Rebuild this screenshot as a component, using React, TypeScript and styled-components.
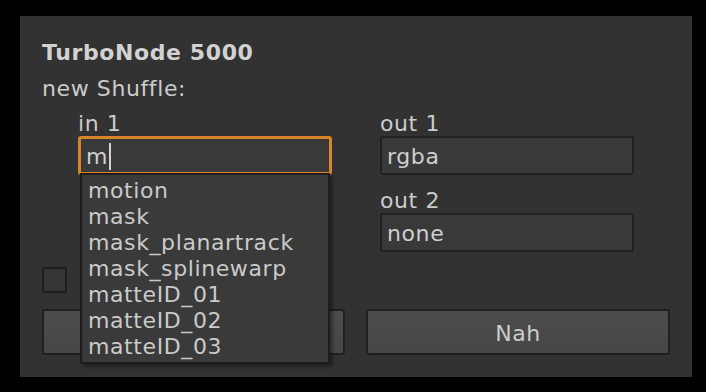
import React from 'react';
import styled, { createGlobalStyle } from 'styled-components';

const GlobalStyle = createGlobalStyle`
  html, body {
    margin: 0;
    padding: 0;
    background: #000;
  }
  body {
    font-family: "DejaVu Sans", Verdana, sans-serif;
    font-size: 22px;
    letter-spacing: 0.6px;
    color: #cbcbcb;
  }
`;

const Page = styled.div`
  padding: 16px 14px 15px 20px;
`;

const Panel = styled.div`
  background: #323232;
  padding: 19px 22px 22px 22px;
`;

const Title = styled.div`
  font-weight: bold;
  line-height: 36px;
  color: #d2d2d2;
`;

const Subtitle = styled.div`
  line-height: 36px;
`;

const FieldsGrid = styled.div`
  margin-top: 5px;
  padding-left: 36px;
  display: grid;
  grid-template-columns: 254px 254px;
  column-gap: 48px;
  row-gap: 14px;
`;

const Field = styled.div`
  display: flex;
  flex-direction: column;
`;

const Label = styled.div`
  line-height: 24px;
`;

const Combo = styled.div`
  position: relative;
`;

const FieldBox = styled.div<{ $focused?: boolean }>`
  box-sizing: border-box;
  height: 39px;
  display: flex;
  align-items: center;
  padding: 1px 5px 0;
  background: #393939;
  border: ${(p) => (p.$focused ? '3px solid #d8852a' : '2px solid #212121')};
  border-radius: 3px;
  color: #cfcfcf;
  white-space: pre;
`;

const Caret = styled.span`
  display: inline-block;
  width: 2px;
  height: 27px;
  margin-left: 1px;
  background: #d4d4d4;
`;

const Dropdown = styled.div`
  position: absolute;
  z-index: 10;
  left: 2px;
  right: 2px;
  top: 37px;
  box-sizing: border-box;
  padding: 3px 0 2px;
  background: #3a3a3a;
  border: 2px solid #1d1d1d;
  box-shadow: 3px 3px 3px rgba(0, 0, 0, 0.35);
`;

const Option = styled.div`
  line-height: 26px;
  padding-left: 6px;
  color: #cacaca;
`;

const Checkbox = styled.div`
  margin-top: 15px;
  width: 25px;
  height: 26px;
  box-sizing: border-box;
  background: #353535;
  border: 2px solid #1f1f1f;
  border-radius: 2px;
`;

const ButtonRow = styled.div`
  margin-top: 16px;
  display: grid;
  grid-template-columns: 303px 304px;
  column-gap: 21px;
`;

const Button = styled.div`
  box-sizing: border-box;
  height: 46px;
  display: flex;
  align-items: center;
  justify-content: center;
  padding-top: 2px;
  background: linear-gradient(#4c4c4c, #474747);
  border: 2px solid #202020;
  border-radius: 3px;
  color: #cccccc;
`;

const layers = [
  'motion',
  'mask',
  'mask_planartrack',
  'mask_splinewarp',
  'matteID_01',
  'matteID_02',
  'matteID_03',
];

export default function App() {
  return (
    <>
      <GlobalStyle />
      <Page>
        <Panel>
          <Title>TurboNode 5000</Title>
          <Subtitle>new Shuffle:</Subtitle>
          <FieldsGrid>
            <Field>
              <Label>in 1</Label>
              <Combo>
                <FieldBox $focused>
                  m<Caret />
                </FieldBox>
                <Dropdown>
                  {layers.map((l) => (
                    <Option key={l}>{l}</Option>
                  ))}
                </Dropdown>
              </Combo>
            </Field>
            <Field>
              <Label>out 1</Label>
              <FieldBox>rgba</FieldBox>
            </Field>
            <div />
            <Field>
              <Label>out 2</Label>
              <FieldBox>none</FieldBox>
            </Field>
          </FieldsGrid>
          <Checkbox />
          <ButtonRow>
            <Button />
            <Button>Nah</Button>
          </ButtonRow>
        </Panel>
      </Page>
    </>
  );
}
